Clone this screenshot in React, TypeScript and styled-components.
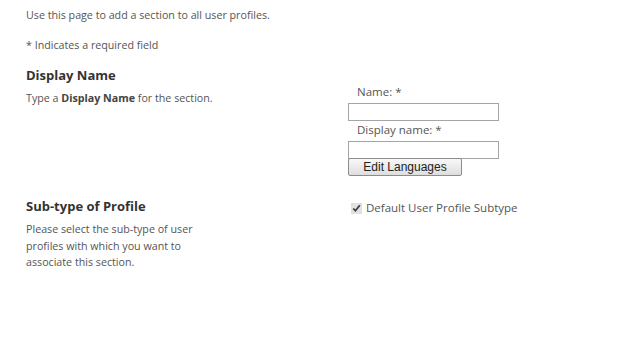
import React from "react"
import styled, {createGlobalStyle} from "styled-components"

const GlobalStyle = createGlobalStyle`
  html, body {
    margin: 0;
    padding: 0;
    background: #fff;
  }
  body {
    font-family: "Open Sans", "DejaVu Sans", sans-serif;
    font-size: 10.7px;
    color: #555;
  }
`

const Page = styled.main`
  width: 624px;
  height: 347px;
  padding: 8px 0 0 26px;
  box-sizing: border-box;
`

const Intro = styled.p`
  margin: 0;
  line-height: 14px;
`

const Required = styled.p`
  margin: 16px 0 0;
  line-height: 14px;
`

const Section = styled.section<{gap: number}>`
  display: grid;
  grid-template-columns: 322px 1fr;
  margin-top: ${props => props.gap}px;
`

const Heading = styled.h3`
  margin: 0;
  font-size: 13px;
  font-weight: 700;
  color: #333;
  line-height: 18px;
`

const Description = styled.p<{narrow?: boolean}>`
  margin: 6px 0 0;
  width: ${props => (props.narrow ? "175px" : "auto")};
  line-height: 16.5px;

  b {
    color: #444;
  }
`

const FieldColumn = styled.div`
  display: flex;
  flex-direction: column;
  align-items: flex-start;
  padding-top: 19px;
  font-size: 11.5px;
`

const Label = styled.label`
  padding-left: 9px;
  line-height: 14px;
  margin-bottom: 4px;
`

const TextBox = styled.input`
  box-sizing: border-box;
  width: 151px;
  height: 18px;
  margin: 0 0 2px;
  border: 1px solid #a5a5a5;
  padding: 0 2px;
  font: inherit;
`

const Button = styled.button`
  box-sizing: border-box;
  width: 114px;
  height: 18px;
  padding: 0;
  margin-top: -3px;
  border: 1px solid #8c8c8c;
  border-radius: 2px;
  background: linear-gradient(#f8f8f8, #dedede);
  font-family: "Liberation Sans", Arial, sans-serif;
  font-size: 12px;
  color: #222;
`

const CheckRow = styled.label`
  display: flex;
  align-items: center;
  gap: 4px;
  padding: 4px 0 0 3px;
  line-height: 14px;
  font-size: 11.5px;
`

const CheckBox = styled.input`
  margin: 0;
  width: 11px;
  height: 11px;
  accent-color: #e2e2e2;
`

export default function App() {
  return (
    <Page>
      <GlobalStyle />
      <Intro>Use this page to add a section to all user profiles.</Intro>
      <Required>* Indicates a required field</Required>
      <Section gap={14}>
        <div>
          <Heading>Display Name</Heading>
          <Description>
            Type a <b>Display Name</b> for the section.
          </Description>
        </div>
        <FieldColumn>
          <Label>Name: *</Label>
          <TextBox type="text" />
          <Label>Display name: *</Label>
          <TextBox type="text" />
          <Button type="button">Edit Languages</Button>
        </FieldColumn>
      </Section>
      <Section gap={21}>
        <div>
          <Heading>Sub-type of Profile</Heading>
          <Description narrow>
            Please select the sub-type of user profiles with which you want to
            associate this section.
          </Description>
        </div>
        <div>
          <CheckRow>
            <CheckBox type="checkbox" defaultChecked />
            Default User Profile Subtype
          </CheckRow>
        </div>
      </Section>
    </Page>
  )
}
